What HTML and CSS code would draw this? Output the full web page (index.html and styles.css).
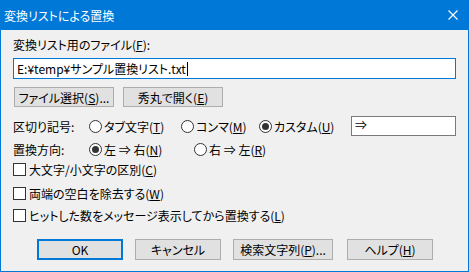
FILE: index.html
```html
<!DOCTYPE html>
<html lang="ja">
  <head>
    <meta charset="UTF-8" />
    <title>変換リストによる置換</title>
    <link rel="stylesheet" href="styles.css">
  </head>
  <body>
    <div class="window">
      <div class="titlebar">
        <span class="title">変換リストによる置換</span>
        <span class="close">
          <svg width="10" height="10" viewBox="0 0 10 10">
            <path d="M0.5 0.5 L9.5 9.5 M9.5 0.5 L0.5 9.5" stroke="#fff" stroke-width="1.1" fill="none" />
          </svg>
        </span>
      </div>

      <div class="content">
        <div class="file-label">変換リスト用のファイル(<u>F</u>):</div>
        <div class="field path">E:¥temp¥サンプル置換リスト.txt<span class="caret"></span></div>

        <div class="btn-row">
          <button class="btn wide">ファイル選択(<u>S</u>)...</button>
          <button class="btn wide">秀丸で開く(<u>E</u>)</button>
        </div>

        <div class="opt-row sep-row">
          <span class="row-label">区切り記号:</span>
          <span class="radio w92"><span class="dot"></span>タブ文字(<u>T</u>)</span>
          <span class="radio w78"><span class="dot"></span>コンマ(<u>M</u>)</span>
          <span class="radio w92"><span class="dot on"></span>カスタム(<u>U</u>)</span>
          <div class="field custom">⇒</div>
        </div>

        <div class="opt-row dir-row">
          <span class="row-label">置換方向:</span>
          <span class="radio w105"><span class="dot on"></span>左 ⇒ 右(<u>N</u>)</span>
          <span class="radio"><span class="dot"></span>右 ⇒ 左(<u>R</u>)</span>
        </div>

        <div class="check cb1"><span class="box"></span>大文字/小文字の区別(<u>C</u>)</div>
        <div class="check cb2"><span class="box"></span>両端の空白を除去する(<u>W</u>)</div>
        <div class="check cb3"><span class="box"></span>ヒットした数をメッセージ表示してから置換する(<u>L</u>)</div>

        <div class="bottom-row">
          <button class="btn default">OK</button>
          <button class="btn">キャンセル</button>
          <button class="btn wide">検索文字列(<u>P</u>)...</button>
          <button class="btn">ヘルプ(<u>H</u>)</button>
        </div>
      </div>
    </div>
  </body>
</html>
```

FILE: styles.css
```css
body {
  margin: 0;
  font-family: "Noto Sans CJK JP", "Noto Sans", sans-serif;
  font-size: 12px;
  font-feature-settings: "palt";
  color: #000;
}

.window {
  width: 469px;
  height: 272px;
  box-sizing: border-box;
  border: 1px solid #0078d7;
  border-top: none;
  background-color: #f0f0f0;
}

/* Title bar */
.titlebar {
  height: 30px;
  background-color: #0078d7;
  color: #fff;
  display: flex;
  align-items: center;
  justify-content: space-between;
  padding: 0 8px 0 4px;
  margin: 0 -1px;
}

.title {
  font-size: 12px;
}

.close {
  display: flex;
  width: 10px;
  height: 10px;
  margin-right: 3px;
}

/* Dialog body */
.content {
  padding: 7px 12px 0 12px;
}

.file-label {
  height: 16px;
  line-height: 16px;
  margin-bottom: 5px;
}

.field {
  box-sizing: border-box;
  background-color: #fff;
  border: 1px solid #7a7a7a;
  padding: 0 3px;
  display: flex;
  align-items: center;
}

.path {
  height: 21px;
  border-color: #0078d7;
  margin-bottom: 8px;
}

.caret {
  display: inline-block;
  width: 1px;
  height: 14px;
  background-color: #000;
  margin-left: 1px;
}

.custom {
  width: 105px;
  height: 20px;
  align-items: flex-start;
  line-height: 16px;
}

.btn {
  font-family: inherit;
  font-size: 12px;
  font-feature-settings: "palt";
  color: #000;
  width: 86px;
  height: 20px;
  padding: 0;
  background-color: #e1e1e1;
  border: 1px solid #adadad;
}

.btn.wide {
  width: 100px;
}

.btn.default {
  border: 2px solid #0078d7;
}

.btn-row {
  display: flex;
  gap: 9px;
  padding-left: 1px;
}

.opt-row {
  display: flex;
  align-items: center;
  height: 20px;
}

.sep-row {
  margin-top: 9px;
}

.dir-row {
  margin-top: 3px;
}

.row-label {
  width: 76px;
}

.radio {
  display: flex;
  align-items: center;
}

.w78 {
  width: 78px;
}

.w92 {
  width: 92px;
}

.w105 {
  width: 105px;
}

.dot {
  width: 13px;
  height: 13px;
  box-sizing: border-box;
  border: 1px solid #333;
  border-radius: 50%;
  background-color: #fff;
  margin-right: 2px;
  display: flex;
  align-items: center;
  justify-content: center;
}

.dot.on::after {
  content: "";
  width: 7px;
  height: 7px;
  border-radius: 50%;
  background-color: #333;
}

.check {
  display: flex;
  align-items: center;
  height: 18px;
}

.box {
  width: 13px;
  height: 13px;
  box-sizing: border-box;
  border: 1px solid #333;
  background-color: #fff;
  margin-right: 3px;
}

.cb1 {
  margin-top: 1px;
}

.cb2 {
  margin-top: 6px;
}

.cb3 {
  margin-top: 4px;
}

.bottom-row {
  display: flex;
  gap: 12px;
  padding-left: 24px;
  margin-top: 15px;
}

.bottom-row .btn {
  height: 21px;
}

.bottom-row .btn:last-child {
  margin-left: 2px;
}
```
